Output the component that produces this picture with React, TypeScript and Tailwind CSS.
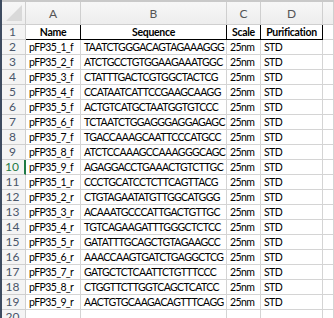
import React from "react";

const rows: [string, string][] = [
  ["pFP35_1_f", "TAATCTGGGACAGTAGAAAGGG"],
  ["pFP35_2_f", "ATCTGCCTGTGGAAGAAATGGC"],
  ["pFP35_3_f", "CTATTTGACTCGTGGCTACTCG"],
  ["pFP35_4_f", "CCATAATCATTCCGAAGCAAGG"],
  ["pFP35_5_f", "ACTGTCATGCTAATGGTGTCCC"],
  ["pFP35_6_f", "TCTAATCTGGAGGGAGGAGAGC"],
  ["pFP35_7_f", "TGACCAAAGCAATTCCCATGCC"],
  ["pFP35_8_f", "ATCTCCAAAGCCAAAGGGCAGC"],
  ["pFP35_9_f", "AGAGGACCTGAAACTGTCTTGC"],
  ["pFP35_1_r", "CCCTGCATCCTCTTCAGTTACG"],
  ["pFP35_2_r", "CTGTAGAATATGTTGGCATGGG"],
  ["pFP35_3_r", "ACAAATGCCCATTGACTGTTGC"],
  ["pFP35_4_r", "TGTCAGAAGATTTGGGCTCTCC"],
  ["pFP35_5_r", "GATATTTGCAGCTGTAGAAGCC"],
  ["pFP35_6_r", "AAACCAAGTGATCTGAGGCTCG"],
  ["pFP35_7_r", "GATGCTCTCAATTCTGTTTCCC"],
  ["pFP35_8_r", "CTGGTTCTTGGTCAGCTCATCC"],
  ["pFP35_9_r", "AACTGTGCAAGACAGTTTCAGG"],
];

const cols = "grid grid-cols-[26px_55px_146px_34px_62px_1fr]";
const font = { fontFamily: "Lato, 'Liberation Sans', sans-serif" };
const cell = "border-r border-b border-[#d4d4d4] flex items-center pl-[3px] pt-[1px] leading-none overflow-hidden whitespace-nowrap";
const hcell = "border-r border-b border-r-black border-b-black font-bold flex items-center justify-center pt-[1px] leading-none overflow-hidden whitespace-nowrap tracking-[-0.3px]";

export default function App() {
  return (
    <div className="w-[334px] h-[318px] overflow-hidden bg-white relative text-[10.5px] tracking-[-0.6px] text-black" style={font}>
      <div className="absolute left-0 top-0 bottom-0 w-[2px] bg-[#3d4b60] z-10" />
      <div className={`${cols} h-[25px] border-t-[2px] border-[#c9c9c9] bg-gradient-to-b from-[#f7f7f7] to-[#ededed]`}>
        <div className="border-r border-b border-[#cfcfcf] relative">
          <div className="absolute right-[3px] bottom-[3px] w-0 h-0 border-l-[16px] border-l-transparent border-b-[16px] border-b-[#d9d9d9]" />
        </div>
        {["A", "B", "C", "D", ""].map((c, i) => (
          <div key={i} className="border-r border-b border-[#cfcfcf] flex items-center justify-center text-[#555] text-[12px] tracking-normal pt-[2px]">
            {c}
          </div>
        ))}
      </div>
      <div className={`${cols} h-[15px]`}>
        <div className="border-r border-b border-[#cfcfcf] bg-[#f4f4f4] flex items-center justify-center text-[#4a566a] text-[12px] tracking-normal leading-none">1</div>
        <div className={hcell}>Name</div>
        <div className={hcell}>Sequence</div>
        <div className={hcell}>Scale</div>
        <div className={hcell}>Purification</div>
        <div className="border-r border-b border-[#d4d4d4]" />
      </div>
      {rows.map(([n, s], i) => {
        const num = i + 2;
        const sel = num === 10;
        return (
          <div key={n} className={`${cols} h-[15px]`}>
            <div className={`border-b border-[#cfcfcf] bg-[#f4f4f4] flex items-center justify-center text-[12px] tracking-normal leading-none ${sel ? "text-[#1f7a45] border-r-[2px] border-r-[#1f7a45]" : "text-[#4a566a] border-r"}`}>{num}</div>
            <div className={cell}>{n}</div>
            <div className={cell}>{s}</div>
            <div className={cell}>25nm</div>
            <div className={cell}>STD</div>
            <div className="border-r border-b border-[#d4d4d4]" />
          </div>
        );
      })}
      <div className={`${cols} h-[15px]`}>
        <div className="border-r border-b border-[#cfcfcf] bg-[#f4f4f4] flex items-center justify-center text-[#4a566a] text-[12px] tracking-normal leading-none">20</div>
        <div className="border-r border-b border-[#d4d4d4]" />
        <div className="border-r border-b border-[#d4d4d4]" />
        <div className="border-r border-b border-[#d4d4d4]" />
        <div className="border-r border-b border-[#d4d4d4]" />
        <div className="border-r border-b border-[#d4d4d4]" />
      </div>
    </div>
  );
}
